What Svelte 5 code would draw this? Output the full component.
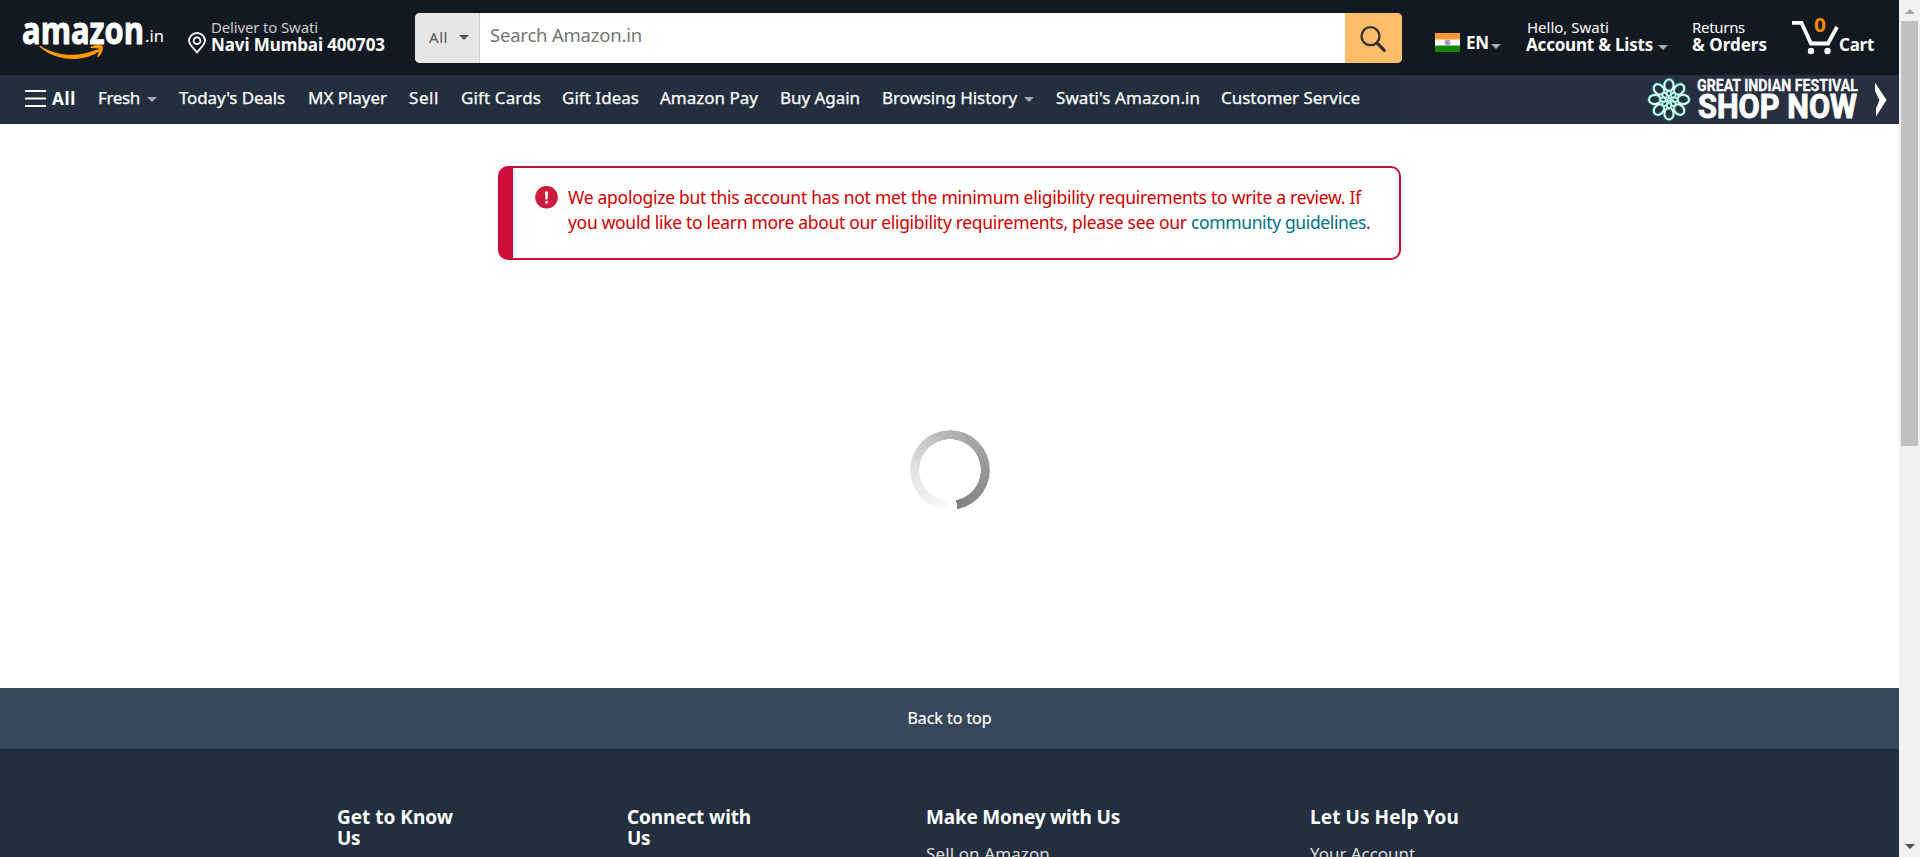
<script>
  function fit(node, width) {
    node.style.letterSpacing = '0px';
    const range = document.createRange();
    range.selectNodeContents(node);
    const natural = range.getBoundingClientRect().width;
    node.style.letterSpacing = (width - natural) / node.textContent.length + 'px';
  }

  const links = [
    { label: 'Fresh', gap: 22, width: 42, arrow: true },
    { label: "Today's Deals", gap: 22, width: 106 },
    { label: 'MX Player', gap: 23, width: 79 },
    { label: 'Sell', gap: 22, width: 30 },
    { label: 'Gift Cards', gap: 22, width: 80 },
    { label: 'Gift Ideas', gap: 21, width: 77 },
    { label: 'Amazon Pay', gap: 21, width: 98 },
    { label: 'Buy Again', gap: 22, width: 80 },
    { label: 'Browsing History', gap: 22, width: 135, arrow: true },
    { label: "Swati's Amazon.in", gap: 22, width: 144 },
    { label: 'Customer Service', gap: 21, width: 139 }
  ];

  const columns = [
    { lines: [['Get to Know', 116], ['Us', 23]] },
    { lines: [['Connect with', 124], ['Us', 23]] },
    { lines: [['Make Money with Us', 194]], link: ['Sell on Amazon', 124] },
    { lines: [['Let Us Help You', 149]], link: ['Your Account', 105] }
  ];
  const petals = [0, 45, 90, 135, 180, 225, 270, 315];
</script>

{#snippet caret(cls)}
  <svg class="caret {cls}" width="10" height="5" viewBox="0 0 10 5"><path d="M0 0h10L5 5z" /></svg>
{/snippet}

<div class="window">
  <div class="page">
    <header>
      <svg class="logo" width="146" height="50" viewBox="0 0 146 50">
        <text x="-1" y="30.500" font-size="37" font-weight="700" textLength="122" lengthAdjust="spacingAndGlyphs" class="word">amazon</text>
        <text x="122" y="29" font-size="17" textLength="19" lengthAdjust="spacingAndGlyphs" class="tld">.in</text>
        <path d="M17.300 32.800c17 11.200 38 11.500 56.500 3.800 1.900-.8 3.300 1 1.600 2.300C59 49.200 33.500 48.500 17 34.300c-1-.9-.5-2 .3-1.500z" fill="#f90" />
        <path d="M68 33.800c3.500-2.200 9.500-2.300 11.400-.9 1.200 1.500-.3 7.500-3.900 10.700-.8.600-1.400.2-1-.6 1.200-3 2.200-6 1.500-7.200-.8-1-4.500-.8-7.400-.7-1 0-1.300-.7-.6-1.300z" fill="#f90" stroke="#f90" stroke-width=".4" />
      </svg>

      <div class="deliver">
        <svg class="pin" width="18" height="22" viewBox="0 0 18 22"><path d="M9 20.300C5 15.500 1 12.500 1 8.800a8 7.800 0 0 1 16 0c0 3.700-4 6.700-8 11.500z" /><circle cx="9" cy="8.700" r="3.400" /></svg>
        <div class="stack">
          <span class="small dim" use:fit={107}>Deliver to Swati</span>
          <span class="strong" use:fit={174}>Navi Mumbai 400703</span>
        </div>
      </div>

      <div class="search">
        <div class="scope"><span use:fit={19}>All</span>{@render caret('dark')}</div>
        <div class="field"><span use:fit={152}>Search Amazon.in</span></div>
        <div class="go">
          <svg width="28" height="28" viewBox="0 0 28 28"><circle cx="11.500" cy="11.200" r="9" stroke-width="2.300" /><path d="M18 18l7.300 7.300" stroke-width="3.200" /></svg>
        </div>
      </div>

      <div class="lang">
        <svg width="25" height="19" viewBox="0 0 25 19">
          <rect width="25" height="19" rx="1" fill="#fff" /><rect width="25" height="6.500" rx="1" fill="#f93" /><rect y="12.500" width="25" height="6.500" rx="1" fill="#128807" />
          <circle cx="12.500" cy="9.500" r="2.500" fill="#b9b9dc" stroke="#8080bb" stroke-width=".8" /><circle cx="12.500" cy="9.500" r=".8" fill="#5050a0" />
        </svg>
        <span class="strong" use:fit={23}>EN</span>{@render caret('low')}
      </div>

      <div class="stack account">
        <span class="small first" use:fit={82}>Hello, Swati</span>
        <div class="pair"><span class="strong" use:fit={127}>Account &amp; Lists</span>{@render caret('')}</div>
      </div>
      <div class="stack orders">
        <span class="small" use:fit={53}>Returns</span>
        <span class="strong" use:fit={75}>&amp; Orders</span>
      </div>
      <div class="cart">
        <svg width="48" height="38" viewBox="0 0 48 38">
          <path d="M0 5.800h9.500L19 26.500h17L45 10" fill="none" stroke="#fff" stroke-width="3.800" />
          <circle cx="19" cy="34" r="3.200" fill="#fff" /><circle cx="35.500" cy="34" r="3.200" fill="#fff" />
          <text x="28" y="15.200" text-anchor="middle" font-size="20" font-weight="700" textLength="12" lengthAdjust="spacingAndGlyphs" class="count">0</text>
        </svg>
        <span class="strong" use:fit={35}>Cart</span>
      </div>
    </header>

    <nav>
      <svg class="bars" width="21" height="17" viewBox="0 0 21 17"><path d="M0 1h21M0 8.500h21M0 16h21" stroke="#fff" stroke-width="2" /></svg>
      <span class="all" use:fit={24}>All</span>
      {#each links as l}
        <span class="link" style="margin-left: {l.gap}px; width: {l.width}px" use:fit={l.width}>{l.label}</span>
        {#if l.arrow}{@render caret('after')}{/if}
      {/each}
      <div class="promo">
        <svg width="251" height="49" viewBox="0 0 251 49">
          <g transform="translate(21 24.500)" fill="none">
            {#each petals as a}
              <ellipse cx="0" cy="-14.200" rx="4.600" ry="5.800" transform="rotate({a})" stroke="#178f7b" stroke-width="3.400" />
            {/each}
            {#each petals as a}
              <g transform="rotate({a})">
                <ellipse cx="0" cy="-14.200" rx="4.600" ry="5.800" stroke="#f4fffc" stroke-width="1.700" />
                <ellipse cx="0" cy="-5" rx="2.200" ry="4" stroke="#2bb79b" stroke-width="2.200" />
                <ellipse cx="0" cy="-5" rx="2.200" ry="4" stroke="#f4fffc" stroke-width="1.400" />
              </g>
            {/each}
          </g>
          <text x="49" y="16.300" font-size="16" font-weight="700" textLength="161" lengthAdjust="spacingAndGlyphs" class="great">GREAT INDIAN FESTIVAL</text>
          <text x="50" y="43" font-size="33" font-weight="700" textLength="159" lengthAdjust="spacingAndGlyphs" class="shop">SHOP NOW</text>
          <path d="M227 7.500l11.500 17.500-10.500 16.500v-8l3.500-8.500-4.500-9z" fill="#fff" />
        </svg>
      </div>
    </nav>

    <main>
      <div class="alert">
        <svg width="23" height="23" viewBox="0 0 23 23"><circle cx="11.500" cy="11.300" r="11.300" fill="#cc1b3b" /><path d="M10 5.500h3l-.5 8h-2zM10.200 15h2.600v2.500h-2.600z" fill="#fff" /></svg>
        <div class="message">
          <div><span use:fit={793}>We apologize but this account has not met the minimum eligibility requirements to write a review. If</span></div>
          <div><span use:fit={623}>you would like to learn more about our eligibility requirements, please see our&nbsp;</span><a use:fit={175}>community guidelines</a>.</div>
        </div>
      </div>
      <div class="spinner"></div>
    </main>

    <div class="top"><span use:fit={84}>Back to top</span></div>
    <footer>
      {#each columns as c}
        <section>
          {#each c.lines as [t, w]}<div class="head"><span use:fit={w}>{t}</span></div>{/each}
          {#if c.link}<div class="item"><span use:fit={c.link[1]}>{c.link[0]}</span></div>{/if}
        </section>
      {/each}
    </footer>
  </div>

  <div class="scroll">
    <svg width="21" height="21" viewBox="0 0 21 21"><path d="M6 14h10l-5-5z" fill="#a3a3a3" /></svg>
    <div class="thumb"></div>
    <svg class="down" width="21" height="21" viewBox="0 0 21 21"><path d="M6 8h10l-5 5z" fill="#505050" /></svg>
  </div>
</div>

<style>
  :global(body) { margin: 0; overflow: hidden; background: #fff; }
  .window { display: flex; width: 1920px; height: 857px; overflow: hidden; font-family: "Noto Sans", "Open Sans", sans-serif; font-size: 17px; color: #fff; }
  .page { width: 1899px; height: 857px; overflow: hidden; }
  span, a { white-space: nowrap; flex-shrink: 0; }
  svg { display: block; flex-shrink: 0; }
  header { display: flex; height: 75px; background: #131921; }
  .logo { margin: 13px 0 0 23px; overflow: visible; }
  .word { fill: #fff; stroke: #fff; stroke-width: 1; font-family: "Open Sans", sans-serif; }
  .tld { fill: #fff; font-family: "Noto Sans", sans-serif; }
  .deliver { display: flex; width: 227px; margin-left: 19px; }
  .pin { margin: 32px 5px 0 0; fill: none; stroke: #fff; stroke-width: 1.800; }
  .stack { display: flex; flex-direction: column; padding-top: 18px; }
  .small { height: 18px; line-height: 18px; font-size: 15px; }
  .first { margin-left: 1px; }
  .dim { color: #ccc; }
  .strong { height: 18px; line-height: 18px; font-size: 17px; font-weight: 700; }
  .caret { fill: #a7acb2; }
  .search { display: flex; width: 987px; height: 50px; margin-top: 13px; overflow: hidden; border-radius: 5px; background: #fff; }
  .scope { display: flex; align-items: center; width: 65px; box-sizing: border-box; padding-left: 14px; border-right: 1px solid #cdcdcd; background: #e6e6e6; color: #555; font-size: 15px; }
  .scope span { margin-top: -2px; }
  .dark { margin: -1px 0 0 11px; fill: #555; }
  .field { flex: 1; padding: 9px 0 0 10px; color: #757575; font-size: 18.500px; line-height: 25px; }
  .go { display: flex; width: 57px; background: #febd69; }
  .go svg { margin: 12px 0 0 14px; fill: none; stroke: #333; stroke-linecap: round; }
  .lang { display: flex; margin: 33px 0 0 33px; width: 66px; }
  .lang .strong { width: 23px; margin-left: 6px; margin-top: 1px; }
  .low { margin: 11px 0 0 2px; }
  .account { width: 166px; margin-left: 25px; }
  .pair { display: flex; }
  .pair .strong { width: 127px; }
  .pair .caret { margin: 9px 0 0 5px; }
  .orders { width: 100px; }
  .cart { display: flex; padding-top: 17px; }
  .cart .strong { margin: 19px 0 0 -1px; }
  .count { fill: #f08804; }
  nav { display: flex; align-items: flex-start; height: 49px; background: #232f3e; line-height: 20px; }
  .bars { margin: 15px 0 0 25px; }
  .all { width: 24px; margin: 14px 0 0 6px; font-weight: 700; }
  .link { margin-top: 13px; -webkit-text-stroke: .25px #fff; }
  .after { margin: 22px 0 0 7px; }
  .promo { flex: 1; display: flex; justify-content: flex-end; margin-left: 38px; background: #272f40; }
  .promo svg { overflow: visible; }
  .promo text { fill: #fff; font-family: Roboto, sans-serif; stroke: #fff; }
  .great { stroke-width: .3; }
  .shop { stroke-width: 1; }
  main { display: flex; flex-direction: column; align-items: center; height: 564px; color: #d00000; }
  .alert { display: flex; width: 903px; height: 94px; box-sizing: border-box; margin-top: 42px; padding: 18px 0 0 22px; border: 2px solid #cc0c39; border-left-width: 15px; border-radius: 10px; }
  .message { margin: -1px 0 0 10px; font-size: 17.500px; line-height: 25px; white-space: nowrap; }
  .message a { color: #007185; }
  .spinner { width: 80px; height: 80px; margin-top: 170px; border-radius: 50%; background: conic-gradient(#b2b2b2, #969696 90deg, #828282 169deg, transparent 169deg 184deg, #fafafa 184deg, #e2e2e2 270deg, #b2b2b2); -webkit-mask: radial-gradient(circle, transparent 30.500px, #000 31px); mask: radial-gradient(circle, transparent 30.500px, #000 31px); }
  .top { display: flex; justify-content: center; height: 61px; background: #37475a; font-size: 16px; line-height: 61px; }
  .top span { -webkit-text-stroke: .2px #fff; }
  footer { display: grid; grid-template-columns: 290px 299px 384px 300px; height: 108px; padding: 58px 0 0 337px; background: #232f3e; }
  .head { height: 21px; line-height: 21px; font-size: 19px; font-weight: 700; }
  .item { margin-top: 15px; line-height: 22px; font-size: 17px; color: #ddd; }
  .scroll { width: 21px; height: 857px; background: #f1f1f1; }
  .thumb { width: 17px; height: 425px; margin-left: 2px; background: #c1c1c1; }
  .down { margin-top: 390px; }
</style>
